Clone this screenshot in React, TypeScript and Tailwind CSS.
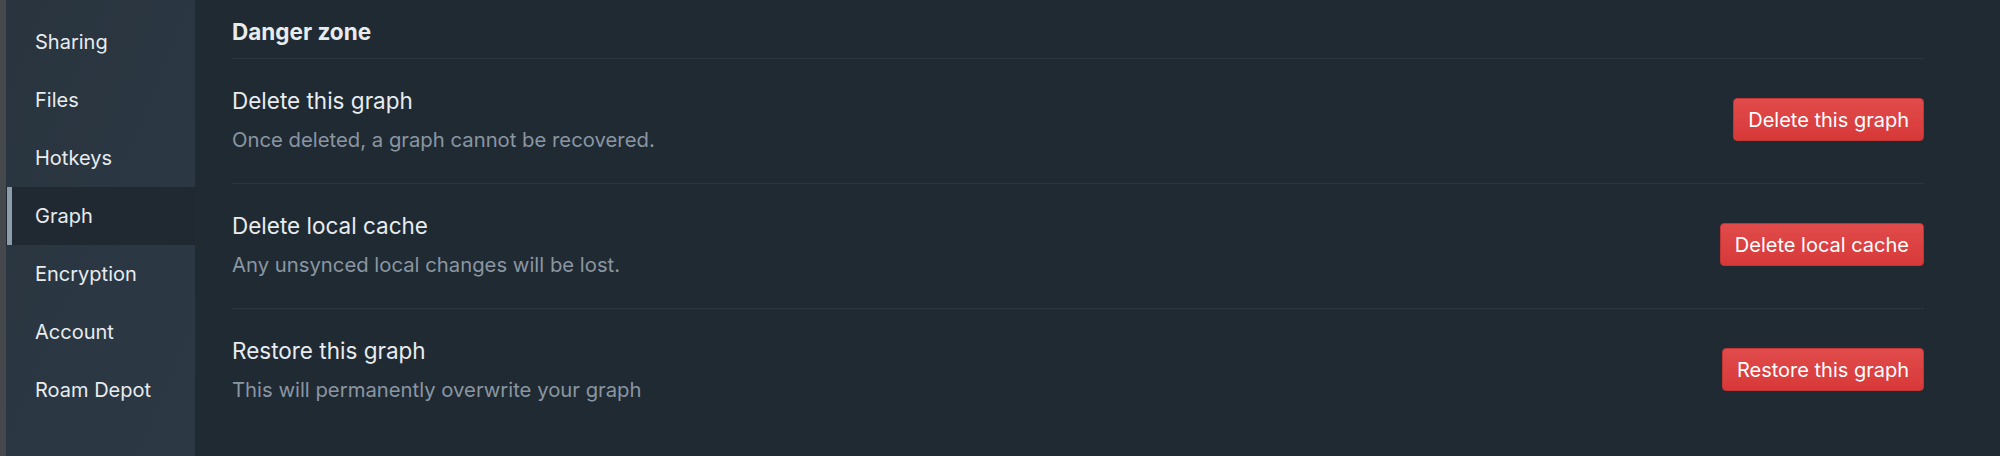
import React from "react";

const navItems = [
  "Sharing",
  "Files",
  "Hotkeys",
  "Graph",
  "Encryption",
  "Account",
  "Roam Depot",
];

const rows = [
  {
    title: "Delete this graph",
    desc: "Once deleted, a graph cannot be recovered.",
    action: "Delete this graph",
  },
  {
    title: "Delete local cache",
    desc: "Any unsynced local changes will be lost.",
    action: "Delete local cache",
  },
  {
    title: "Restore this graph",
    desc: "This will permanently overwrite your graph",
    action: "Restore this graph",
  },
];

function Sidebar() {
  return (
    <div className="flex h-full shrink-0">
      <div className="w-[6px] bg-[#45494d]" />
      <nav className="w-[189px] bg-gradient-to-br from-[#29343e] to-[#2c3945] pt-[13px]">
        {navItems.map((item) => {
          const active = item === "Graph";
          return (
            <div
              key={item}
              className={
                active
                  ? "relative flex h-[58px] items-center bg-[#202932] pl-[29px] text-[20px] text-[#e8ecef]"
                  : "flex h-[58px] items-center pl-[29px] text-[20px] text-[#e8ecef]"
              }
            >
              {active && (
                <span className="absolute left-[1px] top-0 h-full w-[5px] bg-[#8b9cab]" />
              )}
              {item}
            </div>
          );
        })}
      </nav>
    </div>
  );
}

export default function App() {
  return (
    <div
      className="flex h-[456px] w-[2000px] overflow-hidden bg-[#202a33]"
      style={{ fontFamily: "Inter, 'Noto Sans', sans-serif" }}
    >
      <Sidebar />
      <main className="flex-1 pl-[37px] pr-[76px]">
        <h2 className="border-b border-[#2c3641] pt-[17px] pb-[11px] text-[22.5px] font-bold leading-[30px] text-[#e8ecef]">
          Danger zone
        </h2>
        {rows.map((row, i) => (
          <div
            key={row.title}
            className={
              i < rows.length - 1
                ? "flex items-center justify-between border-b border-[#2c3641] pt-[27px] pb-[30px]"
                : "flex items-center justify-between pt-[27px] pb-[30px]"
            }
          >
            <div>
              <div className="text-[22.5px] leading-[30px] text-[#e8ecef]">
                {row.title}
              </div>
              <div className="mt-[10px] text-[20.3px] leading-[27px] text-[#8a96a2]">
                {row.desc}
              </div>
            </div>
            <button className="h-[43px] rounded-[4px] border border-[#c23535] bg-gradient-to-b from-[#e14b4b] to-[#d73838] px-[14px] text-[20px] text-white">
              {row.action}
            </button>
          </div>
        ))}
      </main>
    </div>
  );
}
